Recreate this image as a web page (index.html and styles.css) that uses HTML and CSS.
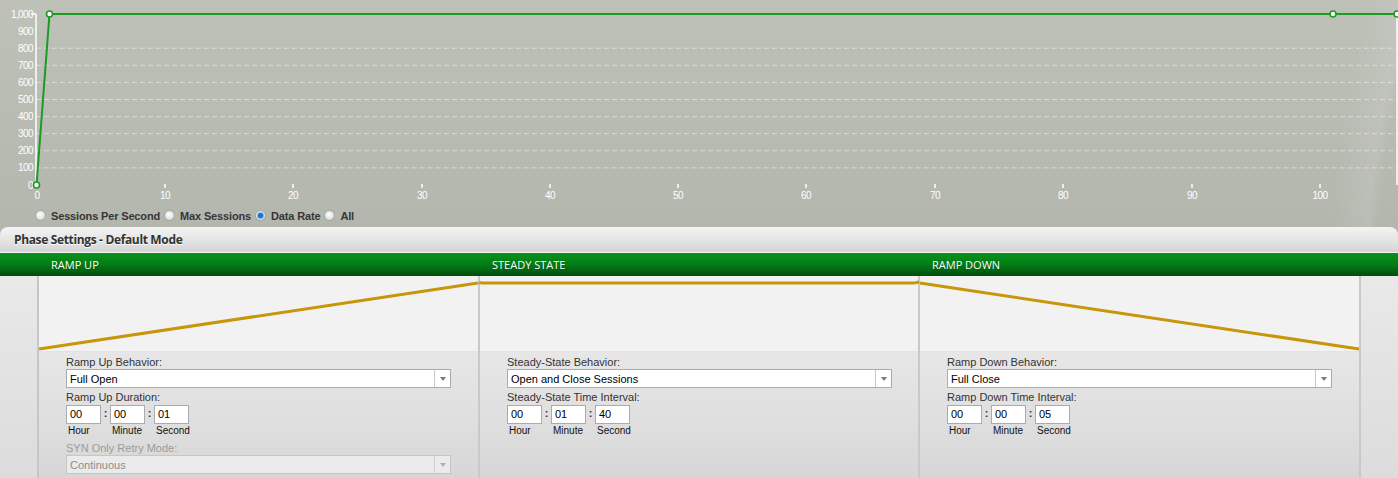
FILE: index.html
```html
<!DOCTYPE html>
<html>
<head>
<meta charset="utf-8">
<link rel="stylesheet" href="styles.css">
</head>
<body>
<div class="page">
  <div class="chart">
    <svg class="plot" width="1398" height="205" viewBox="0 0 1398 205">
      <g class="grid">
        <line x1="36" y1="48.2" x2="1398" y2="48.2"/>
        <line x1="36" y1="65.3" x2="1398" y2="65.3"/>
        <line x1="36" y1="82.4" x2="1398" y2="82.4"/>
        <line x1="36" y1="99.5" x2="1398" y2="99.5"/>
        <line x1="36" y1="116.6" x2="1398" y2="116.6"/>
        <line x1="36" y1="133.7" x2="1398" y2="133.7"/>
        <line x1="36" y1="150.8" x2="1398" y2="150.8"/>
        <line x1="36" y1="167.9" x2="1398" y2="167.9"/>
      </g>
      <g class="axis">
        <line x1="36" y1="14" x2="36" y2="185"/>
        <line x1="31" y1="14" x2="36" y2="14"/>
        <line x1="1397" y1="14" x2="1397" y2="185"/>
        <line x1="165" y1="184" x2="165" y2="188"/>
        <line x1="293" y1="184" x2="293" y2="188"/>
        <line x1="422" y1="184" x2="422" y2="188"/>
        <line x1="550" y1="184" x2="550" y2="188"/>
        <line x1="678" y1="184" x2="678" y2="188"/>
        <line x1="806" y1="184" x2="806" y2="188"/>
        <line x1="935" y1="184" x2="935" y2="188"/>
        <line x1="1063" y1="184" x2="1063" y2="188"/>
        <line x1="1192" y1="184" x2="1192" y2="188"/>
        <line x1="1320" y1="184" x2="1320" y2="188"/>
      </g>
      <g class="ylabels">
        <text x="33" y="17.5">1,000</text>
        <text x="33" y="34.5">900</text>
        <text x="33" y="51.5">800</text>
        <text x="33" y="68.5">700</text>
        <text x="33" y="85.5">600</text>
        <text x="33" y="102.5">500</text>
        <text x="33" y="119.5">400</text>
        <text x="33" y="136.5">300</text>
        <text x="33" y="153.5">200</text>
        <text x="33" y="170.5">100</text>
        <text x="33" y="188.5">0</text>
      </g>
      <g class="xlabels">
        <text x="37" y="199">0</text>
        <text x="165" y="199">10</text>
        <text x="293" y="199">20</text>
        <text x="422" y="199">30</text>
        <text x="550" y="199">40</text>
        <text x="678" y="199">50</text>
        <text x="806" y="199">60</text>
        <text x="935" y="199">70</text>
        <text x="1063" y="199">80</text>
        <text x="1192" y="199">90</text>
        <text x="1320" y="199">100</text>
      </g>
      <polyline class="series-line" points="36.5,185 49.5,14 1333,14 1398,14"/>
      <g class="markers">
        <circle cx="36.5" cy="185" r="3"/>
        <circle cx="49.5" cy="14" r="3"/>
        <circle cx="1333" cy="14" r="3"/>
        <circle cx="1397" cy="14" r="3"/>
      </g>
    </svg>
  </div>

  <div class="series">
    <label class="radio"><span class="dot"></span>Sessions Per Second</label>
    <label class="radio"><span class="dot"></span>Max Sessions</label>
    <label class="radio"><span class="dot on"></span>Data Rate</label>
    <label class="radio"><span class="dot"></span>All</label>
  </div>

  <section class="panel">
    <div class="panel-head">Phase Settings - Default Mode</div>
    <div class="phase-titles">
      <div></div>
      <div class="phase-title">RAMP UP</div>
      <div class="phase-title">STEADY STATE</div>
      <div class="phase-title">RAMP DOWN</div>
      <div></div>
    </div>
    <div class="phase-body">
      <div class="gutter gutter-l"></div>

      <div class="col">
        <div class="profile">
          <svg width="439" height="75" viewBox="0 0 439 75"><line class="gold" x1="0" y1="73" x2="439" y2="7"/></svg>
        </div>
        <div class="form">
          <div class="lbl">Ramp Up Behavior:</div>
          <div class="select"><span class="val">Full Open</span><span class="arrow"></span></div>
          <div class="lbl lbl2">Ramp Up Duration:</div>
          <div class="time">
            <span class="box">00</span><span class="colon">:</span><span class="box">00</span><span class="colon">:</span><span class="box">01</span>
          </div>
          <div class="units"><span>Hour</span><span>Minute</span><span>Second</span></div>
          <div class="lbl lbl3 disabled">SYN Only Retry Mode:</div>
          <div class="select off"><span class="val">Continuous</span><span class="arrow"></span></div>
        </div>
      </div>

      <div class="col">
        <div class="profile">
          <svg width="438" height="75" viewBox="0 0 438 75"><path class="gold" d="M-1 6.5 L2 7 L434 7 Q437 7 439 5.5"/></svg>
        </div>
        <div class="form">
          <div class="lbl">Steady-State Behavior:</div>
          <div class="select"><span class="val">Open and Close Sessions</span><span class="arrow"></span></div>
          <div class="lbl lbl2">Steady-State Time Interval:</div>
          <div class="time">
            <span class="box">00</span><span class="colon">:</span><span class="box">01</span><span class="colon">:</span><span class="box">40</span>
          </div>
          <div class="units"><span>Hour</span><span>Minute</span><span>Second</span></div>
        </div>
      </div>

      <div class="col">
        <div class="profile">
          <svg width="439" height="75" viewBox="0 0 439 75"><line class="gold" x1="0" y1="7" x2="439" y2="73"/></svg>
        </div>
        <div class="form">
          <div class="lbl">Ramp Down Behavior:</div>
          <div class="select"><span class="val">Full Close</span><span class="arrow"></span></div>
          <div class="lbl lbl2">Ramp Down Time Interval:</div>
          <div class="time">
            <span class="box">00</span><span class="colon">:</span><span class="box">00</span><span class="colon">:</span><span class="box">05</span>
          </div>
          <div class="units"><span>Hour</span><span>Minute</span><span>Second</span></div>
        </div>
      </div>

      <div class="gutter gutter-r"></div>
    </div>
  </section>
</div>
</body>
</html>
```

FILE: styles.css
```css
* { box-sizing: border-box; }

html, body {
  margin: 0;
  padding: 0;
}

body {
  width: 1398px;
  height: 478px;
  overflow: hidden;
  font-family: "Liberation Sans", Arial, sans-serif;
}

.page {
  width: 1398px;
  height: 478px;
  background:
    radial-gradient(ellipse 260px 520px at 1560px 260px, rgba(255,255,255,0) 70%, rgba(255,255,255,0.10) 74%, rgba(255,255,255,0) 88%),
    linear-gradient(180deg, #bec1b8 0%, #b3b6ad 50%, #a8aba2 100%);
  display: flex;
  flex-direction: column;
}

.chart {
  height: 205px;
}

.plot {
  display: block;
}

.grid line {
  stroke: rgba(255,255,255,0.45);
  stroke-width: 1;
  stroke-dasharray: 5 3;
}

.axis line {
  stroke: #ffffff;
  stroke-width: 1.5;
}

.ylabels text {
  fill: #ffffff;
  font-family: "Liberation Sans", Arial, sans-serif;
  font-size: 10px;
  letter-spacing: -0.6px;
  text-anchor: end;
}

.xlabels text {
  fill: #ffffff;
  font-family: "Liberation Sans", Arial, sans-serif;
  font-size: 10px;
  letter-spacing: -0.5px;
  text-anchor: middle;
}

.series-line {
  fill: none;
  stroke: #1a9b22;
  stroke-width: 2;
}

.markers circle {
  fill: #ffffff;
  stroke: #1a9b22;
  stroke-width: 1.6;
}

.series {
  height: 22px;
  display: flex;
  align-items: center;
  padding-left: 35px;
  padding-bottom: 1px;
  gap: 4px;
}

.radio {
  display: flex;
  align-items: center;
  gap: 5px;
  font-size: 11px;
  font-weight: bold;
  color: #363636;
  letter-spacing: -0.15px;
}

.dot {
  width: 11px;
  height: 11px;
  border-radius: 50%;
  border: 1px solid #a4a6a2;
  background: radial-gradient(circle at 45% 40%, #ffffff 0%, #e9e9e9 45%, #c8c8c8 100%);
  display: flex;
  align-items: center;
  justify-content: center;
}

.dot.on::after {
  content: "";
  width: 5px;
  height: 5px;
  border-radius: 50%;
  background: #1f6fc4;
  box-shadow: 0 0 0 1px #7fb2e6;
}

.panel {
  flex: 1;
  display: flex;
  flex-direction: column;
  border-radius: 8px 8px 0 0;
  overflow: hidden;
}

.panel-head {
  height: 26px;
  padding-left: 14px;
  display: flex;
  align-items: center;
  background: linear-gradient(180deg, #f4f4f4 0%, #e2e2e2 60%, #d4d4d4 100%);
  border-bottom: 1px solid #f2f2f2;
  font-family: "Open Sans", sans-serif;
  font-weight: 700;
  font-size: 12px;
  letter-spacing: -0.35px;
  color: #333333;
  text-shadow: 0 1px 0 #ffffff;
}

.phase-titles {
  height: 23px;
  display: grid;
  grid-template-columns: 39px 441px 440px 441px 37px;
  background: linear-gradient(180deg, #08921c 0%, #037d15 50%, #004c0c 100%);
}

.phase-title {
  display: flex;
  align-items: center;
  padding-left: 12px;
  font-family: "Open Sans", sans-serif;
  font-size: 11px;
  color: #ffffff;
  text-shadow: 0 0 1px rgba(0,0,0,0.3);
}

.phase-body {
  flex: 1;
  display: grid;
  grid-template-columns: 39px 441px 440px 441px 37px;
}

.gutter {
  background: linear-gradient(180deg, #e9e9e9 0%, #dcdcdc 100%);
}

.gutter-l {
  border-right: 2px solid #c6c6c6;
}

.col {
  display: flex;
  flex-direction: column;
  border-right: 2px solid #c9c9c9;
}

.profile {
  height: 76px;
  background: #f2f2f2;
  border-bottom: 1px solid #e3e3e3;
}

.profile svg {
  display: block;
  overflow: visible;
}

.gold {
  fill: none;
  stroke: #c8960b;
  stroke-width: 3;
}

.form {
  flex: 1;
  padding: 3px 0 0 27px;
  background: linear-gradient(180deg, #e7e7e7 0%, #dedede 60%, #d6d6d6 100%);
  font-size: 11px;
  color: #333333;
}

.lbl {
  height: 14px;
  line-height: 14px;
}

.lbl2 {
  margin-top: 2px;
  height: 15px;
  line-height: 14px;
}

.lbl3 {
  margin-top: 3px;
}

.disabled {
  color: #9b9b9b;
}

.select {
  width: 385px;
  height: 19px;
  border: 1px solid #a8aab6;
  background: #ffffff;
  display: flex;
  align-items: center;
}

.select .val {
  flex: 1;
  padding-left: 3px;
  color: #000000;
}

.select .arrow {
  width: 16px;
  height: 100%;
  border-left: 1px solid #c8c8cc;
  display: flex;
  align-items: center;
  justify-content: center;
}

.select .arrow::after {
  content: "";
  border-left: 3.5px solid transparent;
  border-right: 3.5px solid transparent;
  border-top: 4px solid #7a7a7a;
}

.select.off {
  background: #ebebeb;
  border-color: #c6c6c6;
}

.select.off .val {
  color: #8c8c8c;
}

.select.off .arrow {
  border-left-color: #d0d0d0;
}

.select.off .arrow::after {
  border-top-color: #b0b0b0;
}

.time {
  display: flex;
  height: 19px;
}

.box {
  width: 35px;
  height: 19px;
  border: 1px solid #a8aab6;
  background: #ffffff;
  padding-left: 3px;
  line-height: 17px;
  color: #000000;
}

.colon {
  width: 9px;
  text-align: center;
  font-weight: bold;
  line-height: 17px;
}

.units {
  display: flex;
  gap: 9px;
  height: 14px;
  line-height: 14px;
  font-size: 10px;
  color: #111111;
}

.units span {
  width: 35px;
  padding-left: 2px;
}
```
